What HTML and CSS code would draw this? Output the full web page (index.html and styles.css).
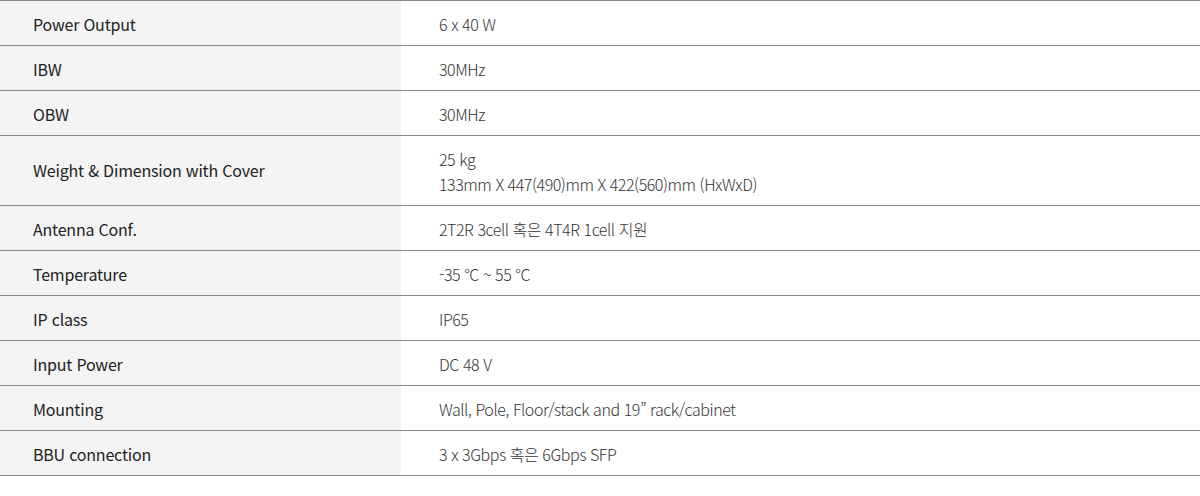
FILE: index.html
```html
<!DOCTYPE html>
<html lang="ko">
<head>
<meta charset="utf-8">
<link rel="stylesheet" href="styles.css">
</head>
<body>
<table class="spec">
  <tbody>
    <tr><th>Power Output</th><td>6 x 40 W</td></tr>
    <tr><th>IBW</th><td>30MHz</td></tr>
    <tr><th>OBW</th><td>30MHz</td></tr>
    <tr class="multi"><th>Weight &amp; Dimension with Cover</th><td>25 kg<br>133mm X 447(490)mm X 422(560)mm (HxWxD)</td></tr>
    <tr><th>Antenna Conf.</th><td>2T2R 3cell 혹은 4T4R 1cell 지원</td></tr>
    <tr><th>Temperature</th><td>-35 °C ~ 55 °C</td></tr>
    <tr><th>IP class</th><td>IP65</td></tr>
    <tr><th>Input Power</th><td>DC 48 V</td></tr>
    <tr><th>Mounting</th><td>Wall, Pole, Floor/stack and 19” rack/cabinet</td></tr>
    <tr><th>BBU connection</th><td>3 x 3Gbps 혹은 6Gbps SFP</td></tr>
  </tbody>
</table>
</body>
</html>
```

FILE: styles.css
```css
html, body {
  margin: 0;
  padding: 0;
  background: #fff;
}
body {
  font-family: "Noto Sans CJK KR", "Noto Sans", sans-serif;
  font-size: 16px;
  line-height: 25px;
}
.spec {
  width: 1200px;
  border-collapse: collapse;
  border-spacing: 0;
}
.spec tr {
  border-top: 1px solid #8a8a8a;
  border-bottom: 1px solid #8a8a8a;
}
.spec th,
.spec td {
  text-align: left;
  vertical-align: middle;
  padding: 11px 0 8px;
  height: 25px;
}
.spec th {
  width: 368px;
  padding-left: 33px;
  background: #f4f4f4;
  color: #222;
  font-weight: 400;
  letter-spacing: -0.2px;
}
.spec .multi th {
  padding-top: 9px;
  padding-bottom: 10px;
}
.spec td {
  padding-left: 38px;
  color: #333;
  font-weight: 300;
  letter-spacing: -0.45px;
}
```
